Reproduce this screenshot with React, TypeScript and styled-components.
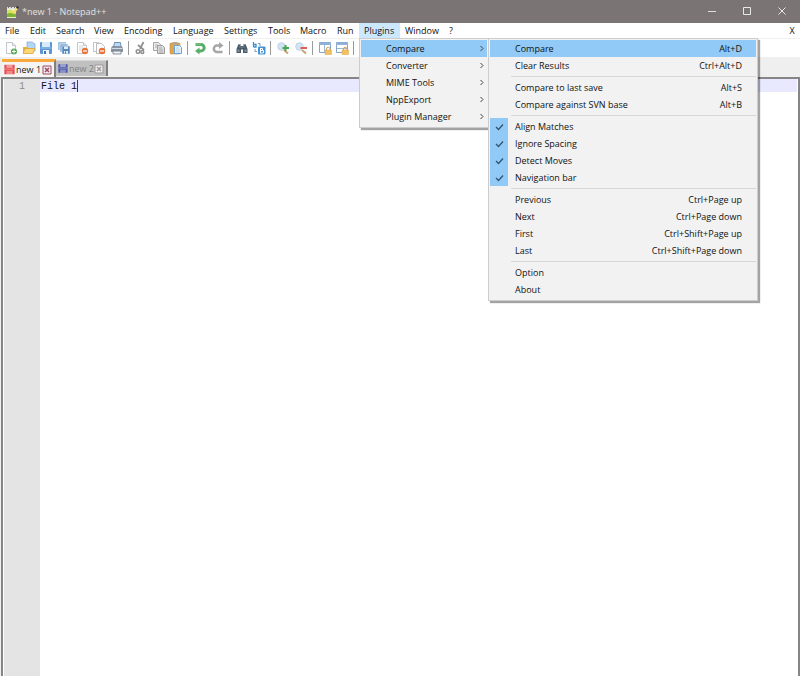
import React from "react";
import styled, { createGlobalStyle } from "styled-components";

const GlobalStyle = createGlobalStyle`
  *, *::before, *::after { box-sizing: border-box; }
  body { margin: 0; background: #efefef; overflow: hidden; }
  button, textarea { font: inherit; color: inherit; border: 0; padding: 0; background: none; }
`;

const Window = styled.div`
  display: flex;
  flex-direction: column;
  min-height: 100vh;
  background: #efefef;
  font-family: "Open Sans", "Noto Sans", sans-serif;
  font-size: 9px;
  line-height: 15px;
  color: #111;
`;

const TitleBar = styled.header`
  display: flex;
  align-items: center;
  height: 23px;
  padding-left: 6px;
  background: #7a7574;
  color: #e4e2e2;
`;

const Title = styled.h1`
  flex: 1;
  margin: 0 0 0 3px;
  font-size: 9px;
  font-weight: 400;
`;

const CaptionButton = styled.button`
  display: grid;
  place-items: center;
  width: 35px;
  height: 23px;
`;

const MenuBar = styled.nav`
  display: flex;
  height: 15px;
  background: #fff;
`;

const MenuSlot = styled.div<{ $width: number }>`
  position: relative;
  width: ${(p) => p.$width}px;
`;

const MenuButton = styled.button<{ $open?: boolean }>`
  display: block;
  width: 100%;
  height: 15px;
  padding-left: 5px;
  text-align: left;
  white-space: nowrap;
  background: ${(p) => (p.$open ? "#cce8ff" : "transparent")};
`;

const CloseDocument = styled.button`
  width: 16px;
  margin-left: auto;
`;

const Popup = styled.div<{ $nested?: boolean }>`
  position: absolute;
  z-index: 2;
  top: ${(p) => (p.$nested ? "-2px" : "100%")};
  left: ${(p) => (p.$nested ? "127px" : "0")};
  width: ${(p) => (p.$nested ? 270 : 130)}px;
  padding: 1px 1px 2px 1px;
  background: #f2f2f2;
  border: 1px solid #ccc;
  box-shadow: 2px 2px 1px rgba(0, 0, 0, 0.36);
`;

const PopupRow = styled.div`
  position: relative;
`;

const PopupItem = styled.button<{ $active?: boolean }>`
  display: flex;
  align-items: center;
  width: 100%;
  height: 17px;
  white-space: nowrap;
  background: ${(p) => (p.$active ? "#91c9f7" : "transparent")};
`;

const Gutter = styled.span<{ $checked?: boolean }>`
  display: grid;
  place-items: center;
  width: 18px;
  height: 17px;
  margin-right: 7px;
  background: ${(p) => (p.$checked ? "#91c9f7" : "transparent")};
`;

const ItemLabel = styled.span`
  flex: 1;
  text-align: left;
`;

const Shortcut = styled.span`
  padding-right: 14px;
`;

const Divider = styled.hr`
  height: 1px;
  margin: 2px 0 2px 21px;
  border: 0;
  background: #d7d7d7;
`;

const ToolBar = styled.div`
  display: flex;
  align-items: center;
  height: 19px;
  padding-left: 4px;
  background: #fff;
  border-top: 1px solid #f0f0f0;
`;

const ToolGroup = styled.div<{ $width: number }>`
  display: flex;
  justify-content: space-between;
  width: ${(p) => p.$width}px;
`;

const ToolButton = styled.button`
  display: block;
  width: 14px;
  height: 14px;
`;

const ToolDivider = styled.span`
  width: 1px;
  height: 14px;
  margin: 0 5px 0 4px;
  background: #9a9a9a;
`;

const TabBar = styled.div`
  display: flex;
  align-items: flex-end;
  height: 20px;
  padding-left: 2px;
`;

const Tab = styled.div<{ $active?: boolean }>`
  display: flex;
  align-items: center;
  width: ${(p) => (p.$active ? 54 : 52)}px;
  height: ${(p) => (p.$active ? 18 : 16)}px;
  padding-left: 2px;
  margin-bottom: ${(p) => (p.$active ? 0 : 1)}px;
  color: ${(p) => (p.$active ? "#1a1a1a" : "#808080")};
  background: ${(p) => (p.$active ? "#f4f4f4" : "#c0c0c0")};
  border-top: ${(p) => (p.$active ? "3px solid #faaa3c" : "1px solid #d8d8d8")};
  border-right: 2px solid #808080;
`;

const TabLabel = styled.button`
  flex: 1;
  padding-left: 1px;
  text-align: left;
  white-space: nowrap;
`;

const TabClose = styled.button`
  display: block;
  width: 10px;
  height: 10px;
  margin-right: 2px;
`;

const Editor = styled.main`
  display: flex;
  flex: 1;
  margin-left: 1px;
  padding: 0 1px 0 1px;
  background: #fff;
  border-top: 2px solid #858585;
  border-left: 2px solid #858585;
  border-right: 2px solid #858585;
  font-family: "Liberation Mono", monospace;
  font-size: 10px;
  line-height: 12px;
`;

const LineNumbers = styled.div`
  width: 36px;
  padding: 2px 15px 0 0;
  text-align: right;
  color: #8c8c8c;
  background: #e4e4e4;
`;

const Page = styled.div`
  position: relative;
  flex: 1;
  display: flex;
`;

const Text = styled.textarea`
  flex: 1;
  padding: 2px 0 0 1px;
  resize: none;
  outline: none;
  color: #111;
  background: linear-gradient(#e8e8ff, #e8e8ff) 0 0 / 100% 13px no-repeat;
`;

const Caret = styled.span`
  position: absolute;
  top: 1px;
  left: 37px;
  width: 1px;
  height: 12px;
  background: #8000ff;
`;

type IconProps = { size?: number; children: React.ReactNode };
const Icon = ({ size = 14, children }: IconProps) => (
  <svg width={size} height={size} viewBox="0 0 14 14" fill="none" display="block" aria-hidden="true">
    {children}
  </svg>
);

const AppLogo = () => (
  <svg width="13" height="14" viewBox="0 0 13 14" aria-hidden="true">
    <path d="M1 2h9v11H1z" fill="#f4f4e8" />
    <path d="M1 2h9v2H1z" fill="#ddd" />
    <path d="M2 2h1v1H2zM5 2h1v1H5zM8 2h1v1H8z" fill="#777" />
    <path d="M1 5l4-.5 5 3v5H1z" fill="#d4e45a" />
    <path d="M1 9c3-2 6 0 9 0v3H1z" fill="#7fb534" />
    <path d="M6 7l4-4 2 1-4 5z" fill="#f3dc74" />
    <path d="M10 2l1-1 2 1-1 2z" fill="#39302d" />
    <path d="M1 12h9v1H1z" fill="#e9edcf" />
  </svg>
);

const sheet = <path d="M2.5 1.5h6l3 3v8h-9z" fill="#fdfdfd" stroke="#c3c7cb" />;
const fold = <path d="M8.5 1.5v3h3" stroke="#c3c7cb" fill="#eee" />;
const minus = (
  <>
    <circle cx="10" cy="10" r="3.2" fill="#e8743b" />
    <path d="M8 10h4" stroke="#fff" strokeWidth="1.2" />
  </>
);

const NewIcon = () => (
  <Icon>
    {sheet}
    {fold}
    <circle cx="10" cy="10.5" r="3" fill="#4fa653" />
    <path d="M8 10.5h4M10 8.5v4" stroke="#fff" />
  </Icon>
);
const OpenIcon = () => (
  <Icon>
    <path d="M5 1h5l3 2v7H5z" fill="#b5d6f3" stroke="#7ba4ce" strokeWidth=".7" />
    <path d="M1 6h4l1 1h5v5H1z" fill="#e8b33b" />
    <path d="M1 12.5l2-5h10l-2 5z" fill="#fbd777" stroke="#d99c30" strokeWidth=".7" />
  </Icon>
);
const SaveIcon = () => (
  <Icon>
    <rect x="1" y="1" width="12" height="12" rx="1" fill="#5c97d4" />
    <path d="M3 1h8v5H3z" fill="#d9ebfa" />
    <path d="M1.5 7h11" stroke="#9cc8ef" />
    <path d="M4 9h6v4H4z" fill="#eef6fd" />
    <path d="M5 10h2v3H5z" fill="#3e76b5" />
  </Icon>
);
const SaveAllIcon = () => (
  <Icon>
    <path d="M1 1h8v8H1z" fill="#a4c4e4" />
    <path d="M3 3h8v8H3z" fill="#7fa9d2" stroke="#e8f1fa" strokeWidth=".6" />
    <path d="M5 5h8v8H5z" fill="#5587bb" stroke="#e8f1fa" strokeWidth=".6" />
    <path d="M7 5.5h4v2.5H7zM7 10h4v2.5H7z" fill="#e1edf8" />
    <path d="M8 10.5h1v2H8z" fill="#3d6a9b" />
  </Icon>
);
const CloseFileIcon = () => (
  <Icon>
    {sheet}
    {fold}
    <path d="M4 5h4M4 7h5M4 9h3" stroke="#c8ccd0" strokeWidth=".8" />
    {minus}
  </Icon>
);
const CloseAllIcon = () => (
  <Icon>
    <path d="M1.5 1.5h5l2 2v7h-7z" fill="#fff" stroke="#c5c5c5" />
    <path d="M4.5 2.5h5l3 3v7h-8z" fill="#fcfcfc" stroke="#bdbdbd" />
    {minus}
  </Icon>
);
const PrintIcon = () => (
  <Icon>
    <path d="M3.5 6l1-4.5h6L11 6" fill="#b9dafa" stroke="#718fae" />
    <path d="M1 7l1.5-2h9L13 7v4H1z" fill="#8694a3" />
    <path d="M1.5 7.5h11" stroke="#d5dce2" />
    <path d="M3 10h8v3H3z" fill="#eef0f2" stroke="#707b87" strokeWidth=".8" />
  </Icon>
);
const CutIcon = () => (
  <Icon>
    <path d="M9.5 1L6 8M4 4l6 5" stroke="#929292" strokeWidth="1.8" />
    <circle cx="4" cy="10.5" r="1.8" stroke="#8d8d8d" strokeWidth="1.4" />
    <circle cx="8.3" cy="11" r="1.5" stroke="#8d8d8d" strokeWidth="1.4" />
  </Icon>
);
const CopyIcon = () => (
  <Icon>
    <path d="M1.5 1.5h5l2 2v6h-7z" fill="#ededed" stroke="#a6a6a6" />
    <path d="M3 4h3M3 6h3" stroke="#aaa" />
    <path d="M5.5 4.5h5l2 2v6h-7z" fill="#dcdcdc" stroke="#9c9c9c" />
    <path d="M7 7h3M7 9h4M7 11h4" stroke="#9c9c9c" strokeWidth=".8" />
  </Icon>
);
const PasteIcon = () => (
  <Icon>
    <rect x="1" y="2" width="10" height="11" rx="1" fill="#dea44e" stroke="#c58e40" strokeWidth=".6" />
    <path d="M3.5 1h5v2.5h-5z" fill="#b0a79b" />
    <path d="M5.5 4.5h5l2 2v6h-7z" fill="#e7f3ff" stroke="#6ba2dc" />
    <path d="M7 7h3M7 9h4M7 11h4" stroke="#a6caec" strokeWidth=".8" />
  </Icon>
);
const UndoIcon = () => (
  <Icon>
    <path d="M2.5 3.5H8a3.2 3.2 0 010 6.4H6" stroke="#5aad69" strokeWidth="3" />
    <path d="M6.5 6.5v7L2 10z" fill="#5aad69" />
    <path d="M3 3h5" stroke="#8acb8c" />
  </Icon>
);
const RedoIcon = () => (
  <Icon>
    <path d="M11.5 11H6a3.2 3.2 0 010-6.4h3" stroke="#a6a6a6" strokeWidth="2.5" />
    <path d="M8 1v7l4.5-3.5z" fill="#a6a6a6" />
  </Icon>
);
const FindIcon = () => (
  <Icon>
    <path d="M3.5 3h2v2h3V3h2l2 5v4H8V8.5H6V12H1.5V8z" fill="#4a5a69" />
    <path d="M2.5 8.5h2V11h-2zM9.5 8.5h2V11h-2z" fill="#7f8f9f" />
    <path d="M3.5 3.5H5M9 3.5h1.5" stroke="#98a4af" />
    <path d="M4 6h6" stroke="#71818f" />
  </Icon>
);
const ReplaceIcon = () => (
  <Icon>
    <path d="M1.5 1v5M1.5 3.5H4V6H1.5" stroke="#3d8ed0" strokeWidth="1.3" />
    <path d="M6 2.5h2V5" stroke="#7f97b0" />
    <path d="M3 8v2.5h2" stroke="#7f97b0" />
    <rect x="6" y="5.5" width="7.5" height="8" rx="1" fill="#4493d4" />
    <path d="M8.5 7v5M8 7.5h2.500v2H8.5M8 9.5h3.5V12H8" stroke="#fff" />
  </Icon>
);
const ZoomIcon = ({ out }: { out?: boolean }) => (
  <Icon>
    <path d="M8 9l4 3.5" stroke="#c9a273" strokeWidth="2" />
    <circle cx="5.5" cy="5.5" r="3.8" fill="#cfe4f4" stroke="#c0d3e2" />
    <path d={out ? "M6.5 7H13" : "M6.5 7H13M9.5 4v6"} stroke={out ? "#e45a4f" : "#4aa651"} strokeWidth="2" />
  </Icon>
);
const SyncIcon = ({ horizontal }: { horizontal?: boolean }) => (
  <Icon>
    <path d="M1.5 1.5h11v10h-11z" fill="#fff" stroke="#86a5cc" />
    <path d="M1 1.5h12V4H1z" fill="#92b1d8" />
    <path d={horizontal ? "M2 7.5h10" : "M6.5 4v7"} stroke="#9fb8d8" />
    <path d="M8.5 9.5V8a1.800 1.800 0 013.6 0v1.5" stroke="#c9a055" />
    <path d="M7 9h6.5v4.5H7z" fill="#f3c160" stroke="#dba748" strokeWidth=".5" />
  </Icon>
);
const Disk = ({ color }: { color: string }) => (
  <Icon size={11}>
    <path d="M.5 1h13v12H.5z" fill={color} />
    <path d="M3 1h8v4H3z" fill="#fff" opacity=".45" />
    <path d="M3 8.5h8V13H3z" fill="#fff" opacity=".35" />
    <path d="M1 6.5h12" stroke="#fff" strokeWidth="1.3" opacity=".4" />
  </Icon>
);
const TabCross = ({ color }: { color: string }) => (
  <svg width="10" height="10" viewBox="0 0 10 10" fill="none" display="block" aria-hidden="true">
    <path d="M1 1h8v8H1z" stroke={color} fill="#f3edf0" />
    <path d="M3 3l4 4M7 3L3 7" stroke={color} strokeWidth="1.5" />
  </svg>
);

type Tool = [string, React.ReactNode];
const toolGroups: { width: number; tools: Tool[] }[] = [
  {
    width: 120,
    tools: [
      ["New", <NewIcon />], ["Open", <OpenIcon />], ["Save", <SaveIcon />], ["Save All", <SaveAllIcon />],
      ["Close", <CloseFileIcon />], ["Close All", <CloseAllIcon />], ["Print", <PrintIcon />],
    ],
  },
  { width: 49, tools: [["Cut", <CutIcon />], ["Copy", <CopyIcon />], ["Paste", <PasteIcon />]] },
  { width: 32, tools: [["Undo", <UndoIcon />], ["Redo", <RedoIcon />]] },
  { width: 31, tools: [["Find", <FindIcon />], ["Replace", <ReplaceIcon />]] },
  { width: 32, tools: [["Zoom In", <ZoomIcon />], ["Zoom Out", <ZoomIcon out />]] },
  { width: 31, tools: [["Sync Vertical", <SyncIcon />], ["Sync Horizontal", <SyncIcon horizontal />]] },
];

const menus: [string, number][] = [
  ["File", 25], ["Edit", 26], ["Search", 38], ["View", 30], ["Encoding", 49], ["Language", 51],
  ["Settings", 44], ["Tools", 32], ["Macro", 37], ["Run", 27], ["Plugins", 41], ["Window", 44], ["?", 16],
];

const plugins = ["Compare", "Converter", "MIME Tools", "NppExport", "Plugin Manager"];

type Entry = { label: string; keys?: string; checked?: boolean };
const compareGroups: Entry[][] = [
  [{ label: "Compare", keys: "Alt+D" }, { label: "Clear Results", keys: "Ctrl+Alt+D" }],
  [{ label: "Compare to last save", keys: "Alt+S" }, { label: "Compare against SVN base", keys: "Alt+B" }],
  ["Align Matches", "Ignore Spacing", "Detect Moves", "Navigation bar"].map((label) => ({ label, checked: true })),
  [
    { label: "Previous", keys: "Ctrl+Page up" },
    { label: "Next", keys: "Ctrl+Page down" },
    { label: "First", keys: "Ctrl+Shift+Page up" },
    { label: "Last", keys: "Ctrl+Shift+Page down" },
  ],
  [{ label: "Option" }, { label: "About" }],
];

const CompareMenu = () => (
  <Popup $nested role="menu">
    {compareGroups.map((group, g) => (
      <React.Fragment key={g}>
        {g > 0 && <Divider />}
        {group.map(({ label, keys, checked }) => (
          <PopupItem
            key={label}
            $active={label === "Compare"}
            role={checked ? "menuitemcheckbox" : "menuitem"}
            aria-checked={checked}
          >
            <Gutter $checked={checked}>
              {checked && (
                <svg width="9" height="8" viewBox="0 0 9 8" fill="none" aria-hidden="true">
                  <path d="M1 4l2.5 2.5L8 1.5" stroke="#2f5675" strokeWidth="1.3" />
                </svg>
              )}
            </Gutter>
            <ItemLabel>{label}</ItemLabel>
            {keys && <Shortcut>{keys}</Shortcut>}
          </PopupItem>
        ))}
      </React.Fragment>
    ))}
  </Popup>
);

const PluginsMenu = () => (
  <Popup role="menu">
    {plugins.map((name) => (
      <PopupRow key={name}>
        <PopupItem $active={name === "Compare"} role="menuitem" aria-haspopup="menu">
          <Gutter />
          <ItemLabel>{name}</ItemLabel>
          <svg width="8" height="7" viewBox="0 0 8 7" fill="none" aria-hidden="true">
            <path d="M1.5 1L4 3.5 1.5 6" stroke="#444" />
          </svg>
        </PopupItem>
        {name === "Compare" && <CompareMenu />}
      </PopupRow>
    ))}
  </Popup>
);

export default function App() {
  return (
    <Window>
      <GlobalStyle />
      <TitleBar>
        <AppLogo />
        <Title>*new 1 - Notepad++</Title>
        <CaptionButton aria-label="Minimize">
          <svg width="9" height="9" stroke="#e0dfdf"><path d="M0 4.5h8" /></svg>
        </CaptionButton>
        <CaptionButton aria-label="Maximize">
          <svg width="9" height="9" stroke="#e8e8e8" fill="none"><path d="M.5 .5h7v7h-7z" /></svg>
        </CaptionButton>
        <CaptionButton aria-label="Close">
          <svg width="9" height="9" stroke="#e8e8e8"><path d="M.5 .5l7 7M7.5 .5l-7 7" /></svg>
        </CaptionButton>
      </TitleBar>
      <MenuBar>
        {menus.map(([name, width]) => (
          <MenuSlot key={name} $width={width}>
            <MenuButton $open={name === "Plugins"}>{name}</MenuButton>
            {name === "Plugins" && <PluginsMenu />}
          </MenuSlot>
        ))}
        <CloseDocument>X</CloseDocument>
      </MenuBar>
      <ToolBar role="toolbar">
        {toolGroups.map(({ width, tools }) => (
          <React.Fragment key={tools[0][0]}>
            <ToolGroup $width={width}>
              {tools.map(([name, icon]) => (
                <ToolButton key={name} aria-label={name}>{icon}</ToolButton>
              ))}
            </ToolGroup>
            <ToolDivider />
          </React.Fragment>
        ))}
      </ToolBar>
      <TabBar>
        <Tab $active>
          <Disk color="#e8474b" />
          <TabLabel>new 1</TabLabel>
          <TabClose aria-label="Close new 1"><TabCross color="#a04861" /></TabClose>
        </Tab>
        <Tab>
          <Disk color="#4a57a6" />
          <TabLabel>new 2</TabLabel>
          <TabClose aria-label="Close new 2"><TabCross color="#999" /></TabClose>
        </Tab>
      </TabBar>
      <Editor>
        <LineNumbers>1</LineNumbers>
        <Page>
          <Text aria-label="Document" defaultValue="File 1" spellCheck={false} />
          <Caret />
        </Page>
      </Editor>
    </Window>
  );
}
